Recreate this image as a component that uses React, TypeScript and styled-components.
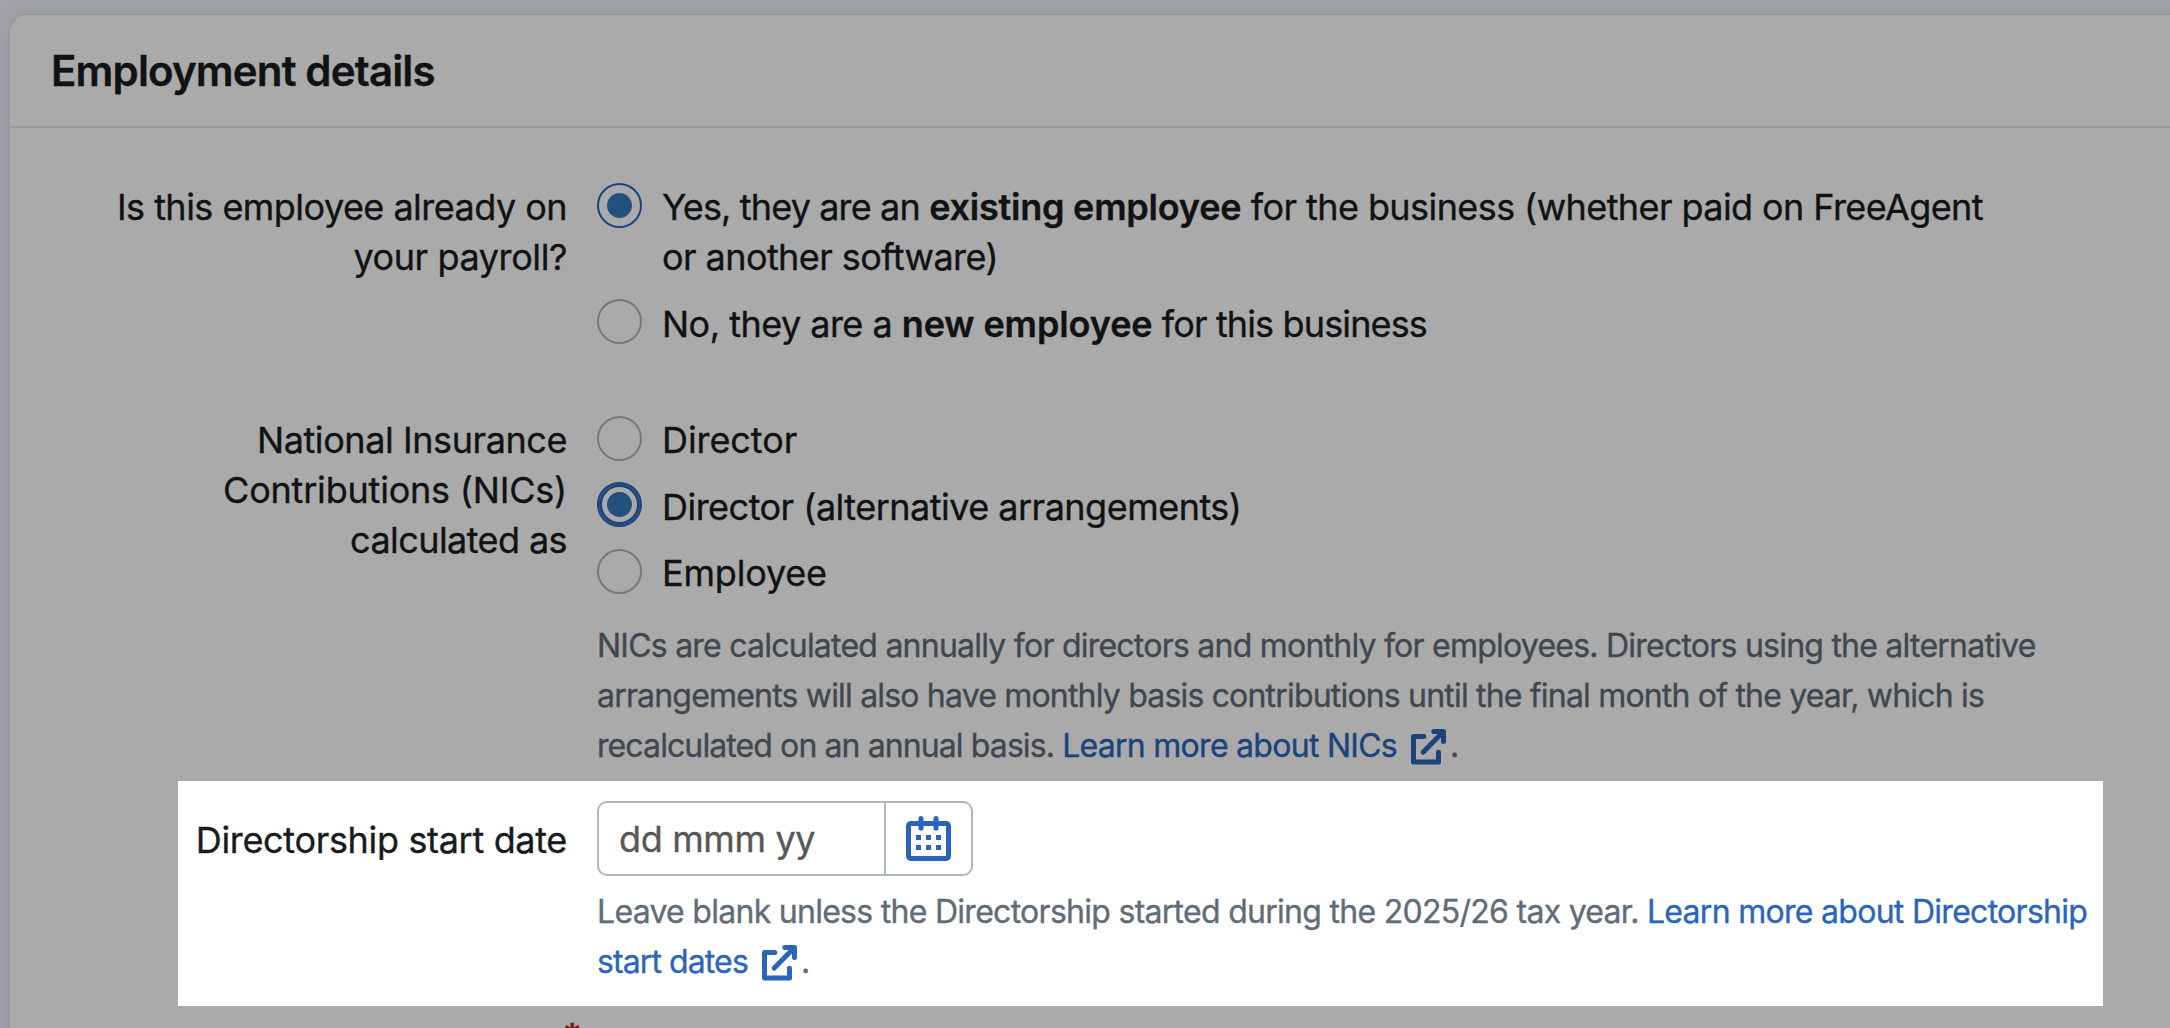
import React from "react";
import styled, { createGlobalStyle, css } from "styled-components";

const color = {
  ink: "#191b1e",
  muted: "#5f6d78",
  link: "#2b65bb",
  line: "#e8e8ee",
  control: "#b0b7bc",
  dot: "#357abd",
  required: "#b8222a",
};

const GlobalStyle = createGlobalStyle`
  * { box-sizing: border-box; }
  html, body { margin: 0; height: 100%; overflow: hidden; }
  body { background: #f4f7fb; }
`;

const Page = styled.main`
  height: 1028px;
  padding: 13px 0 0 8px;
  overflow: hidden;
  color: ${color.ink};
  font-family: Inter, "Liberation Sans", sans-serif;
  font-size: 36px;
  line-height: 50px;
  -webkit-text-stroke: 0.35px currentColor;
`;

const Card = styled.section`
  width: 2200px;
  height: 1100px;
  background: #fff;
  border: 2px solid ${color.line};
  border-radius: 20px;
  box-shadow: 0 0 24px rgba(196, 210, 228, 0.45);
`;

const CardHeader = styled.header`
  height: 113px;
  padding: 31px 41px 0;
  border-bottom: 2px solid ${color.line};
`;

const Title = styled.h2`
  margin: 0;
  font-size: 42px;
  font-weight: 600;
  letter-spacing: -0.85px;
`;

const Form = styled.div`
  padding-top: 54px;
`;

const Row = styled.div<{ $gapAfter?: number }>`
  display: grid;
  grid-template-columns: 557px 1fr;
  column-gap: 30px;
  margin-bottom: ${(p) => p.$gapAfter ?? 0}px;
`;

/* The lit row: its spread shadow dims everything around it. */
const SpotlightRow = styled(Row)`
  position: relative;
  z-index: 1;
  grid-template-columns: 389px 1fr;
  width: 1925px;
  height: 225px;
  margin-left: 168px;
  padding-top: 20px;
  background: #fff;
  box-shadow: 0 0 0 3000px rgba(0, 0, 0, 0.333);
`;

const Label = styled.div<{ $inset?: number }>`
  padding-top: ${(p) => p.$inset ?? 0}px;
  text-align: right;
  white-space: nowrap;
`;

const Text = styled.span<{ $track: number; $block?: boolean }>`
  letter-spacing: ${(p) => p.$track}px;
  ${(p) => p.$block && css`display: block;`}
`;

const Strong = styled(Text).attrs({ as: "strong" })`
  font-weight: 600;
`;

const Options = styled.div`
  display: flex;
  flex-direction: column;
  gap: 16.5px;
`;

const Option = styled.label`
  display: flex;
  align-items: flex-start;
  gap: 20px;
  white-space: nowrap;
`;

const Radio = styled.span<{ $checked?: boolean; $focused?: boolean }>`
  display: grid;
  place-items: center;
  flex: none;
  width: 45px;
  height: 45px;
  margin-top: 0.8px;
  border: 2px solid ${(p) => (p.$checked ? color.link : color.control)};
  border-radius: 50%;
  ${(p) =>
    p.$focused &&
    css`
      box-shadow: inset 0 0 0 1px #4a7cc4, inset 0 0 0 3px ${color.link};
    `}
  ${(p) =>
    p.$checked &&
    css`
      &::after {
        content: "";
        width: 25px;
        height: 25px;
        border-radius: 50%;
        background: ${color.dot};
      }
    `}
`;

const Help = styled.p<{ $gap: number }>`
  margin: ${(p) => p.$gap}px 0 0;
  color: ${color.muted};
  font-size: 32px;
  white-space: nowrap;
`;

const Line = styled.span`
  display: block;
  height: 50px;
`;

const Link = styled.a`
  color: ${color.link};
`;

const LinkIcon = styled.svg`
  width: 35px;
  height: 36px;
  margin: 0 4px 0 14px;
  vertical-align: -8px;
`;

const DateField = styled.div`
  display: flex;
  width: 376px;
  height: 75px;
  border: 2px solid ${color.control};
  border-radius: 10px;
`;

const Placeholder = styled.span`
  flex: 1;
  padding: 11px 0 0 20px;
  color: #575757;
  letter-spacing: -0.35px;
`;

const CalendarButton = styled.span`
  display: grid;
  place-items: center;
  width: 87px;
  border-left: 2px solid ${color.control};
`;

const CalendarSvg = styled.svg`
  width: 45px;
  height: 45px;
`;

const Required = styled.span`
  display: inline-block;
  margin-right: -15px;
  color: ${color.required};
  font-weight: 600;
  line-height: 44px;
`;

function ExternalIcon() {
  return (
    <LinkIcon viewBox="0 0 35 36" fill="none" stroke={color.link} strokeWidth="5" strokeLinecap="round" strokeLinejoin="round">
      <path d="M12.8 7.6H2.5V33H27.5V23.2" />
      <path d="M22.8 2.5H32.5V12.5" />
      <path d="M12.3 23.1L31.5 3.5" />
    </LinkIcon>
  );
}

function CalendarIcon() {
  return (
    <CalendarSvg viewBox="0 0 45 45" fill="none" stroke={color.link} strokeWidth="5">
      <rect x="2.5" y="7.5" width="40" height="35" rx="2.2" />
      <path d="M15 2.6V12.3M30 2.6V12.3" strokeLinecap="round" />
      <path d="M10 21.5H35M10 31.5H35" strokeDasharray="5 5" />
    </CalendarSvg>
  );
}

export default function App() {
  return (
    <Page>
      <GlobalStyle />
      <Card>
        <CardHeader>
          <Title>Employment details</Title>
        </CardHeader>
        <Form>
          <Row $gapAfter={66.5}>
            <Label>
              <Text $block $track={-0.53}>Is this employee already on</Text>
              <Text $block $track={-0.4}>your payroll?</Text>
            </Label>
            <Options>
              <Option>
                <Radio $checked />
                <span>
                  <Text $track={-0.86}>Yes, they are an </Text>
                  <Strong $track={-0.22}>existing employee</Strong>
                  <Text $track={-0.58}> for the business (whether paid on FreeAgent</Text>
                  <Text $block $track={-0.57}>or another software)</Text>
                </span>
              </Option>
              <Option>
                <Radio />
                <span>
                  <Text $track={-0.52}>No, they are a </Text>
                  <Strong $track={-0.1}>new employee</Strong>
                  <Text $track={-0.86}> for this business</Text>
                </span>
              </Option>
            </Options>
          </Row>

          <Row $gapAfter={10.2}>
            <Label>
              <Text $block $track={-0.42}>National Insurance</Text>
              <Text $block $track={-0.2}>Contributions (NICs)</Text>
              <Text $block $track={-0.58}>calculated as</Text>
            </Label>
            <div>
              <Options>
                <Option>
                  <Radio />
                  <Text $track={-0.08}>Director</Text>
                </Option>
                <Option>
                  <Radio $checked $focused />
                  <Text $track={-0.515}>Director (alternative arrangements)</Text>
                </Option>
                <Option>
                  <Radio />
                  <Text $track={-0.18}>Employee</Text>
                </Option>
              </Options>
              <Help $gap={22.8}>
                <Line>
                  <Text $track={-0.767}>
                    NICs are calculated annually for directors and monthly for employees. Directors using the alternative
                  </Text>
                </Line>
                <Line>
                  <Text $track={-0.814}>
                    arrangements will also have monthly basis contributions until the final month of the year, which is
                  </Text>
                </Line>
                <Line>
                  <Text $track={-0.9}>recalculated on an annual basis. </Text>
                  <Link>
                    <Text $track={-0.72}>Learn more about NICs</Text>
                    <ExternalIcon />
                  </Link>
                  .
                </Line>
              </Help>
            </div>
          </Row>

          <SpotlightRow>
            <Label $inset={14}>
              <Text $track={-0.33}>Directorship start date</Text>
            </Label>
            <div>
              <DateField>
                <Placeholder>dd mmm yy</Placeholder>
                <CalendarButton>
                  <CalendarIcon />
                </CalendarButton>
              </DateField>
              <Help $gap={10.8}>
                <Line>
                  <Text $track={-0.717}>Leave blank unless the Directorship started during the 2025/26 tax year. </Text>
                  <Link>
                    <Text $track={-0.71}>Learn more about Directorship</Text>
                  </Link>
                </Line>
                <Line>
                  <Link>
                    <Text $track={-0.9}>start dates</Text>
                    <ExternalIcon />
                  </Link>
                  .
                </Line>
              </Help>
            </div>
          </SpotlightRow>

          <Row>
            <Label $inset={5}>
              <Required>*</Required>
            </Label>
          </Row>
        </Form>
      </Card>
    </Page>
  );
}
